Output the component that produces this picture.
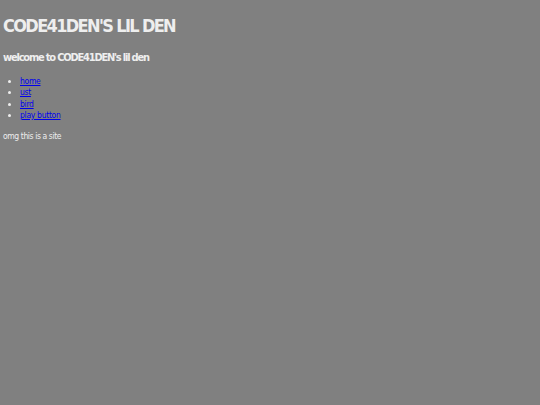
export default function App() {
  return (
    <div className="min-h-[405px] w-full bg-[#808080] text-[#eeeeee] px-[3px] py-px font-stretch-condensed" style={{ fontFamily: '"DejaVu Sans", sans-serif' }}>
      <h1 className="mt-[14px] text-[18px] font-bold leading-[22px] tracking-[-1.65px]">CODE41DEN'S LIL DEN</h1>
      <h2 className="mt-[14px] text-[11px] font-bold leading-[14px] tracking-[-1.2px]">welcome to CODE41DEN's lil den</h2>
      <ul className="mt-[11px] list-disc pl-[17px] text-[8.5px] leading-[11.3px] tracking-[-0.3px]">
        <li><a href="#" className="text-[#0000ee] underline">home</a></li>
        <li><a href="#" className="text-[#0000ee] underline">ust</a></li>
        <li><a href="#" className="text-[#0000ee] underline">bird</a></li>
        <li><a href="#" className="text-[#0000ee] underline">play button</a></li>
      </ul>
      <p className="mt-[10px] text-[8.5px] leading-[11px] tracking-[-0.4px]">omg this is a site</p>
    </div>
  );
}
